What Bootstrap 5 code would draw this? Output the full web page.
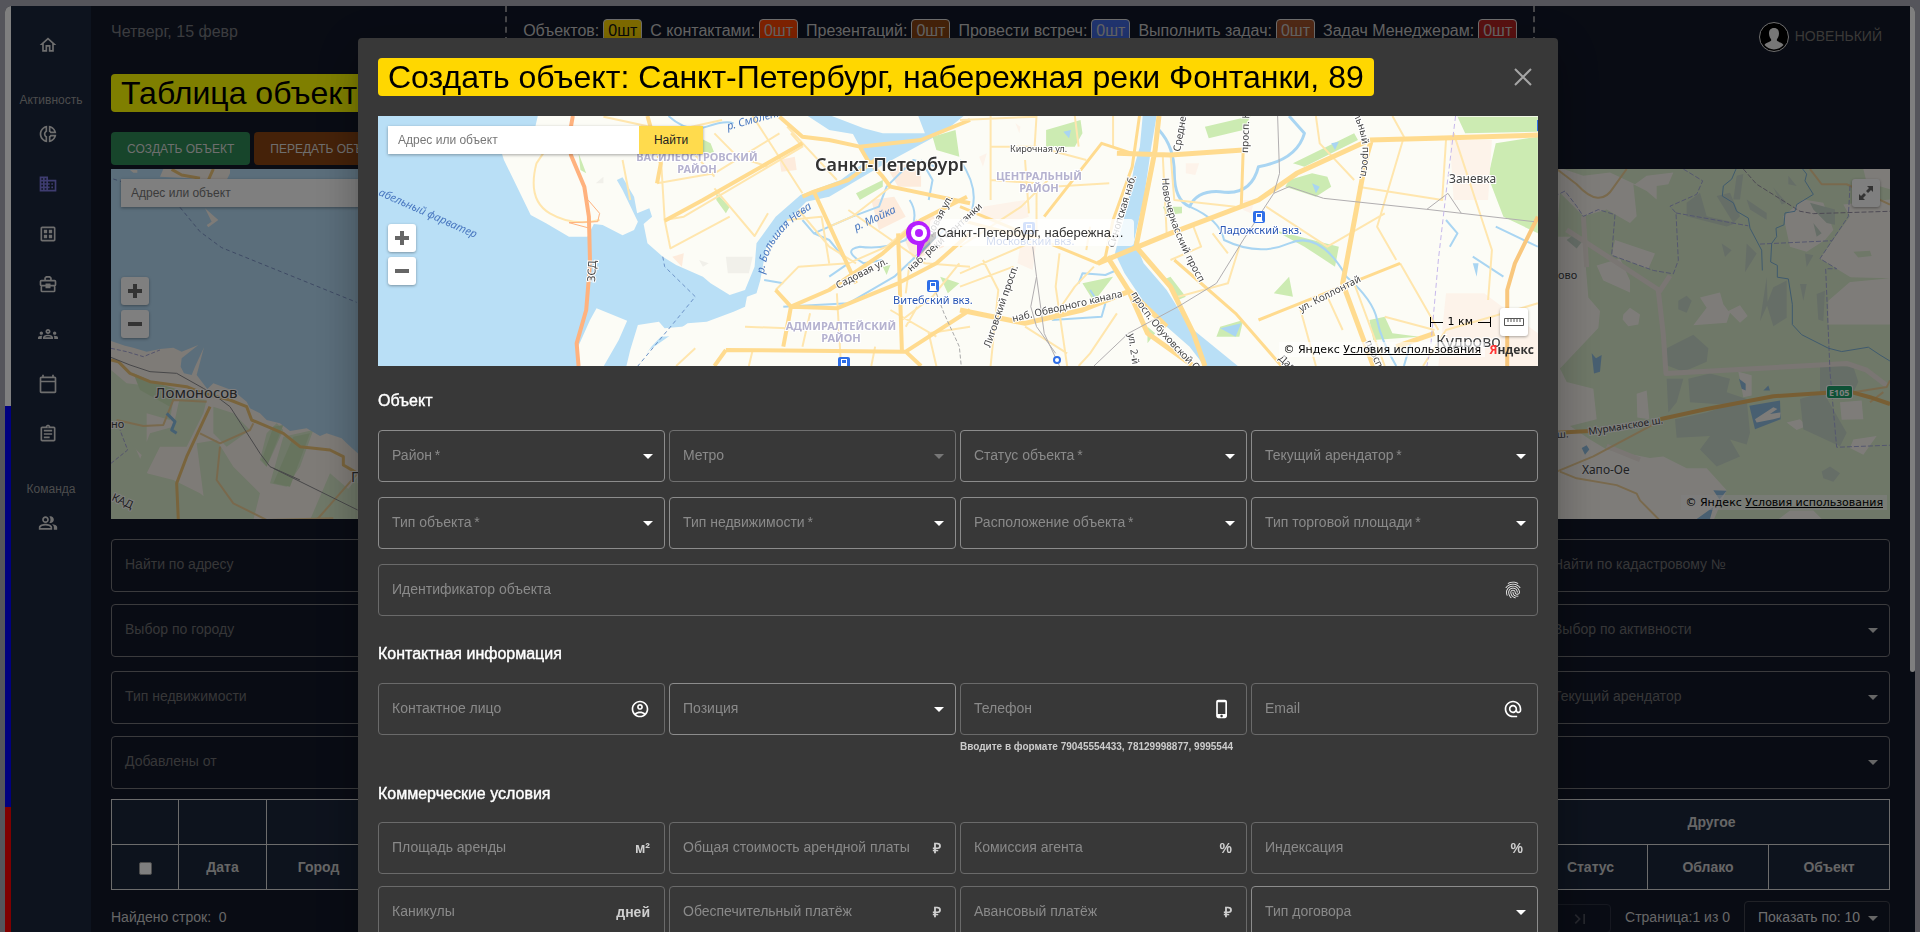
<!DOCTYPE html>
<html lang="ru">
<head>
<meta charset="utf-8">
<meta name="viewport" content="width=device-width, initial-scale=1">
<title>Таблица объектов</title>
<link href="https://cdn.jsdelivr.net/npm/bootstrap@5.3.0/dist/css/bootstrap.min.css" rel="stylesheet">
<style>
html, body { height: 100%; }
body { background: #aaabb7; font-family: "Liberation Sans", Arial, sans-serif; font-size: 14px; line-height: 20px; color: #ddd; overflow: hidden; }
svg { fill: currentColor; display: block; flex: none; }
.ico { width: 20px; height: 20px; }
.shell { height: 100vh; padding: 6px 5px 0; }
.shell-in { border-radius: 6px 6px 0 0; overflow: hidden; background: #11182a; }
.flag { flex: none; width: 6px; background: linear-gradient(#fff 400px, #00f 400px, #00f 801px, #f00 801px); }
.scroller { flex: none; width: 5px; }
.scroller div { height: 666px; background: #fff; border-radius: 0 0 3px 3px; }
.side { width: 80px; background: #1a263d; padding-top: 14px; color: #ddd; }
.side a { height: 50px; color: inherit; display: flex; align-items: center; justify-content: center; }
.side a svg { margin-right: 6px; }
.side a.current { color: #7c78e0; }
.side h6 { font-size: 12px; line-height: 18px; margin: 21px 0 0; font-weight: 400; text-align: center; color: #999; }
.page-main { background: #121829; padding: 0 20px; min-width: 0; }
.topbar { display: grid; grid-template-columns: 10fr auto 9fr; height: 68px; }
.day { font-size: 16px; color: #77787e; padding-top: 16px; }
.stats { border: dashed #8f8f94; border-width: 0 2px; padding: 13px 16px 0; font-size: 16px; line-height: 24px; white-space: nowrap; gap: 8px; align-items: flex-start; color: #ccc; }
.pill { border: 1px solid #ddd; border-radius: 4px; padding: 0 4px; margin-left: 4px; display: inline-block; line-height: 22px; }
.user { padding: 16px 8px 0 0; gap: 6px; color: #75726e; }
.bar-title { font-size: 32px; line-height: 38px; border-radius: 4px; padding: 0 10px; color: #000; font-weight: 400; margin: 0; white-space: nowrap; }
.act { font-size: 12px; height: 33px; padding: 0 16px; color: #ddd; border: 0; border-radius: 4px; }
.mapbox { position: relative; overflow: hidden; color: #333; }
.mapbox > svg { width: 100%; height: 100%; }
.finder { position: absolute; left: 10px; top: 10px; box-shadow: 0 1px 3px rgba(0,0,0,.35); }
.finder input { width: 251px; height: 28px; border: 0; padding: 0 10px; font-size: 12px; background: #fff; color: #333; }
.finder input::placeholder { color: #777; opacity: 1; }
.finder button { width: 64px; height: 28px; border: 0; background: #ffdb4d; font-size: 12px; color: #222; }
.mapbtn { width: 28px; height: 28px; padding: 0; border: 0; border-radius: 3px; background: #fff; color: #666; box-shadow: 0 1px 3px rgba(0,0,0,.35); display: flex; align-items: center; justify-content: center; }
.zoomers { position: absolute; left: 10px; top: 108px; display: grid; gap: 5px; }
.credits { position: absolute; background: rgba(255,255,255,.6); font: 11px/15px "DejaVu Sans", sans-serif; color: #000; white-space: nowrap; padding: 0 4px; }
.credits a { color: #000; }
.field { position: relative; }
.field input, .field select { display: block; width: 100%; height: 52px; border: 1px solid #6a6a6a; border-radius: 4px; background: transparent; color: #fff; padding: 0 14px; font-size: 14px; appearance: none; }
.field select { border-color: #8c8c8c; }
.field select:disabled { border-color: #707070; opacity: 1; }
.field label { position: absolute; inset: 0 44px 2px 14px; display: flex; align-items: center; pointer-events: none; color: #8a8a8a; white-space: nowrap; }
.tail { position: absolute; inset: 0 15px 0 auto; display: flex; align-items: center; pointer-events: none; color: #fff; }
.arrow::after { content: ""; position: absolute; right: 12px; top: 24px; border: solid transparent; border-width: 5px 5px 0; border-top-color: #fff; pointer-events: none; }
.arrow.off::after { border-top-color: #777; }
.unit { font-weight: 700; color: #cfcfcf; }
.filters { display: grid; grid-template-columns: repeat(5, minmax(0, 1fr)); column-gap: 6px; row-gap: 12px; }
.filters .last { grid-column: 5; }
.filters .field input, .filters .field select { height: 53px; border-color: #76777b; }
.filters .field label { color: #6e6e70; bottom: 4px; }
.filters .arrow::after { border-top-color: #ccc; }
.grid-head { table-layout: fixed; width: 100%; border-collapse: collapse; background: #1b263b; color: #ccc; text-align: center; }
.grid-head th { border: 1px solid #d8d8d8; height: 45px; padding: 0; font-weight: 700; }
.grid-head input { width: 13px; height: 13px; margin: 0; vertical-align: middle; appearance: none; background: #fff; border: 1px solid #999; border-radius: 2px; }
.pager { color: #ccc; height: 34px; margin-top: 11px; }
.pager .count { padding-top: 6px; }
.pager .last-page { height: 29px; width: 62px; border: 1px solid #2c3140; border-radius: 4px; background: none; color: #4c4f5c; display: flex; align-items: center; justify-content: center; margin-top: 3px; }
.pager select { height: 34px; width: 146px; border: 1px solid #42454f; border-radius: 4px; background: transparent; color: #ddd; appearance: none; padding: 0 13px 2px; display: block; font-size: 14px; }
.pager .arrow::after { top: 15px; border-top-color: #ccc; }
.shade { --bs-backdrop-opacity: .5; }
.modal { padding-right: 4px; overflow: hidden; }
.modal-dialog { max-width: 1200px; margin: 38px auto; }
.modal-content { background: #383838; border: 0; border-radius: 4px; padding: 20px; color: #fff; box-shadow: 0 11px 15px -7px rgba(0,0,0,.2), 0 24px 38px 3px rgba(0,0,0,.14), 0 9px 46px 8px rgba(0,0,0,.12); }
.modal-content h3 { font-size: 16px; line-height: 20px; font-weight: 400; -webkit-text-stroke: .4px #fff; margin: 0 0 19px; }
.closer { background: none; border: 0; padding: 0; color: #a5a5a5; width: 30px; height: 30px; display: flex; align-items: center; justify-content: center; }
.cells { display: grid; grid-template-columns: repeat(4, minmax(0, 1fr)); column-gap: 4px; row-gap: 15px; align-items: start; }
.cells.tight { row-gap: 12px; }
.wide { grid-column: 1 / -1; }
.hint-text { font-size: 10px; line-height: 12px; font-weight: 700; color: #ccc; margin-top: 6px; white-space: nowrap; }
.mapbox .nm { font-family: "Noto Sans", "Open Sans", sans-serif; font-size: 11px; fill: #444; paint-order: stroke; stroke: #fff; stroke-width: 2px; }
.nm .dist { font-size: 11px; font-weight: 700; fill: #b5b2cf; text-anchor: middle; }
.nm .river { fill: #4a78c0; font-style: italic; stroke: none; font-size: 11px; }
.nm .stn { fill: #2a57b5; }
.nm .street { font-size: 10px; }
.nm .town { font-size: 12px; }
.nm .city { font-size: 18px; font-weight: 600; fill: #333; }
.ln * { fill: none; vector-effect: non-scaling-stroke; stroke-linejoin: round; }
.caption-box { position: absolute; left: 552px; top: 103px; height: 27px; line-height: 27px; padding: 0 10px 0 7px; background: rgba(255,255,255,.8); border-radius: 4px; color: #333; font-size: 13px; white-space: nowrap; }
.measure { position: absolute; right: 10px; bottom: 30px; gap: 9px; }
.km { font: 11px/14px "DejaVu Sans", sans-serif; color: #000; gap: 5px; }
.km i { width: 13px; height: 10px; border-left: 1px solid #000; background: linear-gradient(#000, #000) 0 5px / 100% 1px no-repeat; }
.km i + span + i { border-left: 0; border-right: 1px solid #000; }
.brand { position: absolute; right: 4px; bottom: 8px; font: 700 12px/16px "Open Sans", "Noto Sans", sans-serif; color: #333; }
.brand span { color: #f33; }
</style>
</head>
<body>
<div class="shell">
<div class="shell-in d-flex h-100">
  <div class="flag"></div>
  <nav class="side flex-shrink-0" aria-label="Меню">
    <a href="#" aria-label="Главная"><svg class="ico" viewBox="0 0 24 24"><path d="M12 5.69l5 4.5V18h-2v-6H9v6H7v-7.81l5-4.5M12 3L2 12h3v8h6v-6h2v6h6v-8h3L12 3z"/></svg></a>
    <h6>Активность</h6>
    <a href="#" aria-label="Статистика"><svg class="ico" viewBox="0 0 24 24"><path d="M14.82 11h7.13c-.47-4.72-4.23-8.48-8.95-8.95v7.13c.85.31 1.51.97 1.82 1.82zM15 4.58C17 5.4 18.6 7 19.42 9h-3.43c-.28-.37-.62-.71-.99-.99V4.58zM2 12c0 5.19 3.95 9.45 9 9.95v-7.13C9.84 14.4 9 13.3 9 12c0-1.3.84-2.4 2-2.82V2.05c-5.05.5-9 4.76-9 9.95zm7-7.42v3.44c-1.23.92-2 2.39-2 3.98 0 1.59.77 3.06 2 3.99v3.44C6.04 18.24 4 15.35 4 12c0-3.35 2.04-6.24 5-7.42zm4 10.24v7.13c4.72-.47 8.48-4.23 8.95-8.95h-7.13c-.31.85-.97 1.51-1.82 1.82zm2 1.17c.37-.28.71-.61.99-.99h3.43C18.6 17 17 18.6 15 19.42v-3.43z"/></svg></a>
    <a href="#" class="current" aria-label="Объекты"><svg class="ico" viewBox="0 0 24 24"><path d="M12 7V3H2v18h20V7H12zM6 19H4v-2h2v2zm0-4H4v-2h2v2zm0-4H4V9h2v2zm0-4H4V5h2v2zm4 12H8v-2h2v2zm0-4H8v-2h2v2zm0-4H8V9h2v2zm0-4H8V5h2v2zm10 12h-8v-2h2v-2h-2v-2h2v-2h-2V9h8v10zm-2-8h-2v2h2v-2zm0 4h-2v2h2v-2z"/></svg></a>
    <a href="#" aria-label="Таблицы"><svg class="ico" viewBox="0 0 24 24"><path d="M19 3H5c-1.1 0-2 .9-2 2v14c0 1.1.9 2 2 2h14c1.1 0 2-.9 2-2V5c0-1.1-.9-2-2-2zm0 16H5V5h14v14zM7 7h4v4H7zm6 0h4v4h-4zm-6 6h4v4H7zm6 0h4v4h-4z"/></svg></a>
    <a href="#" aria-label="Портфель"><svg class="ico" viewBox="0 0 24 24"><path fill="none" stroke="currentColor" stroke-width="2" d="M8.500 7V5l1.500-1.500h4L15.500 5v2M4 8h16q1 0 1 1v4q0 1-1 1H4q-1 0-1-1V9q0-1 1-1zM4 14v6q0 1 1 1h14q1 0 1-1v-6M10 12.500h4v3.500h-4z"/></svg></a>
    <a href="#" aria-label="Группы"><svg class="ico" viewBox="0 0 24 24"><path d="M4 13c1.100 0 2-.9 2-2s-.9-2-2-2-2 .9-2 2 .9 2 2 2zm1.130 1.100c-.37-.06-.74-.1-1.130-.1-.99 0-1.930.21-2.780.58C.48 14.900 0 15.620 0 16.430V18h4.500v-1.610c0-.83.23-1.610.63-2.290zM20 13c1.100 0 2-.9 2-2s-.9-2-2-2-2 .9-2 2 .9 2 2 2zm4 3.430c0-.81-.48-1.530-1.220-1.850-.85-.37-1.790-.58-2.780-.58-.39 0-.76.04-1.130.1.4.68.63 1.460.63 2.290V18H24v-1.570zm-7.760-2.780c-1.170-.52-2.610-.9-4.240-.9-1.630 0-3.070.39-4.240.9C6.680 14.130 6 15.210 6 16.390V18h12v-1.610c0-1.180-.68-2.260-1.760-2.740zM8.070 16c.09-.23.13-.39.91-.69.97-.38 1.990-.56 3.020-.56s2.050.18 3.020.56c.77.3.81.46.91.69H8.070zM12 8c.55 0 1 .45 1 1s-.45 1-1 1-1-.45-1-1 .45-1 1-1m0-2c-1.660 0-3 1.340-3 3s1.340 3 3 3 3-1.340 3-3-1.340-3-3-3z"/></svg></a>
    <a href="#" aria-label="Календарь"><svg class="ico" viewBox="0 0 24 24"><path d="M20 3h-1V1h-2v2H7V1H5v2H4c-1.100 0-2 .9-2 2v16c0 1.100.9 2 2 2h16c1.100 0 2-.9 2-2V5c0-1.100-.9-2-2-2zm0 18H4V10h16v11zm0-13H4V5h16v3z"/></svg></a>
    <a href="#" aria-label="Задачи"><svg class="ico" viewBox="0 0 24 24"><path d="M7 15h7v2H7zm0-4h10v2H7zm0-4h10v2H7zm12-4h-4.180C14.400 1.840 13.300 1 12 1c-1.300 0-2.400.84-2.820 2H5c-1.100 0-2 .9-2 2v14c0 1.100.9 2 2 2h14c1.100 0 2-.9 2-2V5c0-1.100-.9-2-2-2zm-7-.25c.41 0 .75.34.75.75s-.34.75-.75.75-.75-.34-.75-.75.34-.75.75-.75zM19 19H5V5h14v14z"/></svg></a>
    <h6>Команда</h6>
    <a href="#" aria-label="Сотрудники"><svg class="ico" viewBox="0 0 24 24"><path d="M16.670 13.130C18.040 14.060 19 15.320 19 17v3h4v-3c0-2.180-3.570-3.470-6.330-3.870zM15 12c2.210 0 4-1.790 4-4s-1.790-4-4-4c-.47 0-.91.1-1.330.24C14.500 5.270 15 6.580 15 8s-.5 2.730-1.330 3.760c.42.14.86.24 1.330.24zM9 12c2.210 0 4-1.790 4-4s-1.790-4-4-4-4 1.790-4 4 1.790 4 4 4zm0-6c1.100 0 2 .9 2 2s-.9 2-2 2-2-.9-2-2 .9-2 2-2zm0 7c-2.670 0-8 1.340-8 4v3h16v-3c0-2.660-5.330-4-8-4zm6 5H3v-.99C3.200 16.290 6.300 15 9 15s5.800 1.290 6 2v1z"/></svg></a>
  </nav>

  <main class="page-main flex-grow-1 overflow-hidden">
    <header class="topbar">
      <div class="day">Четверг, 15 февр</div>
      <div class="stats d-flex">
        <div>Объектов:<span class="pill" style="background:#ffd700;color:#111">0шт</span></div>
        <div>С контактами:<span class="pill" style="background:#ff4500">0шт</span></div>
        <div>Презентаций:<span class="pill" style="background:#8b4513">0шт</span></div>
        <div>Провести встреч:<span class="pill" style="background:#4169e1">0шт</span></div>
        <div>Выполнить задач:<span class="pill" style="background:#a0522d">0шт</span></div>
        <div>Задач Менеджерам:<span class="pill" style="background:#b22222">0шт</span></div>
      </div>
      <div class="user d-flex justify-content-end">
        <svg width="30" height="30" viewBox="0 0 30 30"><circle cx="15" cy="15" r="14.500" fill="#000" stroke="#ddd"/><path d="M15 6c3.500 0 5 2.300 5 5.500 0 3-1.500 4.500-2.300 6.500.3 2 5.300 2 6.800 5a12.500 12.500 0 0 1-19 0c1.500-3 6.500-3 6.800-5-.8-2-2.300-3.500-2.300-6.500C10 8.300 11.500 6 15 6z" fill="#eee"/></svg>
        <span class="pt-1">НОВЕНЬКИЙ</span>
      </div>
    </header>
    <div class="d-flex"><h1 class="bar-title" style="background:#ff0">Таблица объектов</h1></div>
    <div class="d-flex gap-1 mb-1" style="margin-top:20px">
      <button class="act" style="background:#2e8b57">СОЗДАТЬ ОБЪЕКТ</button>
      <button class="act" style="background:#8b4513">ПЕРЕДАТЬ ОБЪЕКТ</button>
    </div>

    <div class="mapbox" style="height:350px">
      <svg viewBox="0 0 1779 350" preserveAspectRatio="xMidYMid slice">
        <rect width="1779" height="350" fill="#def0d0"/>
        <g transform="matrix(.33333 0 0 .33333 -111 -169)">
          <path fill="#fdf6ee" d="M333 1000H1300V1560H1000L1060 1480 990 1420 930 1560H700L640 1500 560 1480 440 1420 360 1240 333 1200z"/>
          <path fill="#def0d0" d="M333 1110L380 1150 470 1160 520 1200 510 1260 440 1240 440 1380 400 1340 360 1290 333 1300zM540 1190L620 1200 610 1240 560 1340 480 1340 440 1420 520 1440 600 1480 700 1560 720 1610H333V1400L400 1430 450 1300 520 1280zM640 1220L700 1240 750 1290 680 1340 640 1300zM590 1330L650 1320 700 1400 780 1480 760 1560 680 1600 620 1560zM800 1300L830 1270 850 1290 800 1400 780 1380zM850 1310L940 1290 900 1400 860 1460 810 1450zM980 1550L1073 1430V1610H1010z"/>
          <path fill="#cfe8bd" d="M400 1120L470 1150 540 1170 510 1220 420 1170zM820 1280L850 1275 800 1400 785 1380zM880 1310L930 1300 870 1460 820 1450z"/>
          <path fill="#b6dcf6" d="M333 500H1300V1460L1120 1380 1073 1360 1040 1330 1025 1315 980 1300 960 1308 920 1285 870 1293 840 1270 800 1260 780 1240 750 1225 740 1205 700 1172 640 1150 622 1167 590 1125 612 1042 585 1100 575 1125 552 1120 542 1100 545 1075 595 1035 545 1055 520 1043 480 1047 440 1055 400 1043 375 1037 333 1023z"/>
          <path fill="#fdf6ee" d="M490 507H690V520L680 540H600L570 535 480 530zM390 510H412V518H400zM615 625L655 660 625 682 620 675 635 665z"/>
        </g>
        <g class="ln" transform="matrix(.33333 0 0 .33333 -111 -169)">
          <path stroke="#7d94c8" stroke-dasharray="4 3" d="M540 622L600 695 665 743 1070 907M340 537L365 545"/>
          <path stroke="#f2c879" stroke-width="3" d="M333 1080L355 1085 390 1120 450 1145 560 1160 610 1180 690 1200 740 1220 755 1260 850 1300 900 1340 990 1350 1030 1370 1030 1395 1073 1420M630 1220L560 1370 530 1450 535 1560 550 1610M400 1600L460 1620 640 1640M515 508L545 525 600 535M640 507L625 540"/>
          <path stroke="#f2d39a" stroke-width="2" d="M350 1260L430 1278 490 1275 520 1200 620 1205M600 1300L660 1330 750 1290 760 1270M660 1340L650 1440 700 1510 800 1560 1000 1555M1073 1420L950 1560"/>
          <path stroke="#8f8f92" d="M333 1072L390 1095 450 1115 530 1120 610 1165 650 1190 690 1220 780 1360 810 1400 900 1440M820 1405L1073 1530"/>
          <path stroke="#8bc0e6" stroke-width="3" d="M500 1240L525 1265 515 1290 530 1300"/>
          <path stroke="#a8a8d8" stroke-dasharray="4 2" d="M333 1045L380 1055 430 1070 480 1050M333 1390L383 1350 360 1290"/>
        </g>
        <g transform="matrix(.33333 0 0 .33806 1429 -169)">
          <path fill="#fdf9f3" d="M-100 500H70L130 520 210 510 285 545 320 520 400 510 385 545 350 550 350 590 320 565 280 545 290 640 270 660 200 620 130 640 90 600 60 570 50 700 130 700 145 880 180 920 175 970 60 1090 80 1130 160 1150 170 1240 90 1260 150 1300 200 1330 330 1355 370 1350 440 1385 500 1385 560 1450 520 1540H-100z"/>
          <path fill="#fdf9f3" d="M225 710L345 750 325 795 215 755zM170 785L240 765 270 830 270 865 190 830zM250 930L270 910 300 930 295 960 265 965 248 945zM480 880L540 865 550 900 565 920 600 903 623 935 600 955 570 925 560 955 460 962 500 910zM730 640L790 590 850 600 880 680 855 710 800 745 750 730zM910 605L1050 590V960H865L865 890 940 825 840 765 930 640zM290 1165L320 1155 328 1240 292 1235zM595 1100L635 1110V1170L610 1175zM900 1190L965 1185 970 1240 905 1242zM740 1250L780 1240 800 1260 770 1272zM940 1300L1010 1290 970 1345 930 1325zM710 1540L750 1510H820L850 1540zM970 500H1050V560L980 540z"/>
          <path fill="#def0d0" d="M870 840L1050 823 930 820zM940 745L990 742 995 757 955 762z"/>
          <path fill="#ccdccf" d="M440 600L480 570 500 640 590 660 560 670 440 640zM530 580L570 570 600 640 580 660zM590 520L610 515 600 590 580 590zM620 590L680 630 680 650 630 620zM700 555L740 600 725 605zM745 520L770 550 745 545zM810 600L885 620 885 665 860 660 820 620zM820 660L845 690 830 700zM545 720L575 740 555 760zM620 720L650 750 615 805zM795 750L820 755 800 790zM680 820L683 900 660 950zM700 850L740 830 740 940 700 965 680 900zM780 840L800 840 790 890zM830 870L855 860 850 950 835 945zM415 890L440 875 455 890 440 925 415 915zM380 1030L460 990 505 1030 500 1070 430 1100 378 1080zM380 1120L430 1120 410 1190 385 1220zM445 1120L510 1105 570 1120 560 1160 620 1180 610 1200 450 1190zM405 1240L500 1220 620 1180 630 1280 620 1315 570 1300 600 1350 530 1380 480 1330 510 1290 410 1295zM780 1180L850 1160 920 1280 900 1320 790 1270zM840 1080L940 1085 955 1130 940 1160 840 1160zM845 1395L870 1380 900 1400 880 1425 850 1415zM80 710L100 695 130 710 110 735z"/>
          <path fill="#91bfe2" d="M628 1200L720 1185 722 1240 645 1270zM597 1120L617 1135 617 1155 605 1150zM670 1155L685 1140 690 1155zM155 1045L168 1060 185 1050 180 1100 162 1105zM125 1325L140 1317 148 1330 135 1345zM520 1450L560 1452 520 1500 510 1535H470L520 1500 540 1480z"/>
          <path fill="#fdf9f3" d="M645 1240L700 1205 712 1210 690 1225 722 1220 720 1235 700 1240 650 1250z"/>
        </g>
        <g class="ln" transform="matrix(.33333 0 0 .33806 1429 -169)">
          <path stroke="#f4ece6" stroke-width="5" d="M80 680L360 860 390 815M130 640L140 790M355 860L370 990 378 1105 920 1075 980 1095 1040 1140M200 1320L300 1360"/>
          <path stroke="#f2d39a" stroke-width="2" d="M50 500L110 545Q180 620 220 555L260 500M810 500L845 545H920L1050 605M50 1395L160 1350 360 1245M60 1395L110 1415 230 1435 290 1460 300 1480 360 1540M940 1160L1040 1145 1050 1125M990 1190L1030 1160"/>
          <path stroke="#f0bd68" stroke-width="4" d="M50 1280L150 1275M360 1240L500 1210 700 1172 860 1162M935 1160L990 1175 1050 1195"/>
          <path stroke="#9b95a8" stroke-dasharray="5 2" d="M610 500L650 545 780 625 820 632 1050 625"/>
          <path stroke="#a9aede" stroke-dasharray="5 2" d="M430 500L488 535 470 575 390 610 408 630 415 770 400 810 340 800 215 755 225 635 175 620 130 640 110 610 75 565 55 575M408 630L625 668M660 722L875 712M930 550L925 640 840 765 890 795H857L870 1100 890 1323 1050 1317"/>
          <path stroke="#7fb5dd" d="M588 500L575 530 550 550 547 580 580 600 590 625 625 645 630 675 665 740 667 800M788 500L800 515 795 535 820 575 770 605 765 625 735 630 732 665 708 675 710 700 695 720 692 775 712 785 712 820 745 825 757 900 757 960 785 990 865 1030 905 1040 985 1027 1020 1050 1050 1068"/>
        </g>
        <g class="nm">
          <text x="44" y="229" style="font-size:15px">Ломоносов</text>
          <text x="0" y="259">но</text><text x="0" y="331" transform="rotate(24 0 331)">КАД</text>
          <text x="240" y="313" style="font-size:14px">Петергоф</text>
          <text x="1447" y="110">ово</text>
          <text class="street" x="1446" y="269" transform="rotate(-3 1446 269)">ш.</text>
          <text class="street" x="1478" y="266" transform="rotate(-9 1478 266)">Мурманское ш.</text>
          <text class="town" x="1471" y="305">Хапо-Ое</text>
          <rect x="1716" y="217" width="25" height="12" rx="2" fill="#1ca36c"/><text x="1718" y="227" style="font-size:9px;font-weight:700;fill:#fff;stroke:none">E105</text>
        </g>
      </svg>
      <div class="finder"><input type="text" aria-label="Адрес или объект" placeholder="Адрес или объект"></div>
      <div class="zoomers">
        <button class="mapbtn" aria-label="Приблизить"><svg width="14" height="14"><path d="M5 0h4v5h5v4H9v5H5V9H0V5h5z"/></svg></button>
        <button class="mapbtn" aria-label="Отдалить"><svg width="14" height="14"><path d="M0 5h14v4H0z"/></svg></button>
      </div>
      <button class="mapbtn position-absolute" style="right:10px;top:10px" aria-label="На весь экран"><svg width="14" height="14"><path d="M8 0h6v6l-2-2-3 3-2-2 3-3zM0 8l2 2 3-3 2 2-3 3 2 2H0z"/></svg></button>
      <div class="credits" style="right:3px;bottom:9px">© Яндекс <a href="#">Условия использования</a></div>
    </div>

    <div class="filters" style="margin-top:20px">
      <div class="field"><input id="f1" type="text"><label for="f1">Найти по адресу</label></div>
      <div class="field last"><input id="f2" type="text"><label for="f2">Найти по кадастровому №</label></div>
      <div class="field arrow"><select id="f3"><option></option></select><label for="f3">Выбор по городу</label></div>
      <div class="field arrow last"><select id="f4"><option></option></select><label for="f4">Выбор по активности</label></div>
    </div>
    <div class="filters" style="margin:14px 0 10px">
      <div class="field arrow"><select id="f5"><option></option></select><label for="f5">Тип недвижимости</label></div>
      <div class="field arrow last"><select id="f6"><option></option></select><label for="f6">Текущий арендатор</label></div>
      <div class="field"><input id="f7" type="text"><label for="f7">Добавлены от</label></div>
      <div class="field arrow last"><select aria-label="Сортировка"><option></option></select></div>
    </div>
    <table class="grid-head">
      <colgroup><col style="width:67px"><col style="width:88px"><col style="width:104px"><col><col style="width:114px"><col style="width:121px"><col style="width:121px"></colgroup>
      <thead>
        <tr><th></th><th></th><th></th><th></th><th colspan="3">Другое</th></tr>
        <tr><th><input type="checkbox" aria-label="Выбрать все"></th><th>Дата</th><th>Город</th><th></th><th>Статус</th><th>Облако</th><th>Объект</th></tr>
      </thead>
    </table>
    <div class="pager d-flex justify-content-between">
      <div class="count">Найдено строк: &nbsp;0</div>
      <div class="d-flex" style="gap:14px">
        <button class="last-page" disabled aria-label="Последняя страница"><svg class="ico" viewBox="0 0 24 24"><path d="M5.590 7.410L10.180 12l-4.590 4.590L7 18l6-6-6-6zM16 6h2v12h-2z"/></svg></button>
        <div class="count">Страница:1 из 0</div>
        <div class="position-relative arrow"><select aria-label="Показать по"><option>Показать по: 10</option></select></div>
      </div>
    </div>
  </main>
  <div class="scroller"><div></div></div>
</div>
</div>

<div class="modal-backdrop show shade"></div>
<div class="modal d-block" tabindex="-1" role="dialog" aria-modal="true" aria-labelledby="dlg-title">
<div class="modal-dialog">
<div class="modal-content">
  <div class="d-flex justify-content-between align-items-center" style="margin-bottom:20px">
    <h2 class="bar-title" id="dlg-title" style="background:#ffd700">Создать объект: Санкт-Петербург, набережная реки Фонтанки, 89</h2>
    <button class="closer" aria-label="Закрыть"><svg width="18" height="18"><path d="M1 1l16 16M17 1L1 17" stroke="currentColor" stroke-width="2"/></svg></button>
  </div>

  <div class="mapbox" style="height:250px">
    <svg viewBox="0 0 1160 250" preserveAspectRatio="xMidYMid slice">
      <rect width="1160" height="250" fill="#fcfcf6"/>
      <g transform="matrix(.38268 0 0 .33333 -8 -116)">
        <path fill="#b9dff6" d="M0 340H440L432 380 345 462 350 480 420 645 460 670 520 710H568L585 672 608 675 660 706 690 690 700 665 660 570 645 540 660 532 690 590 698 640 730 625 737 650 715 672 725 730 765 770 800 795 870 830 890 850 940 885 980 870 1005 800 1010 730 1060 650 1125 585 1230 540 1300 480 1275 430 1262 402 1200 390 1140 345H1200L1290 385 1340 400 1450 400 1430 340H1560L1500 395 1340 495 1200 590 1140 605 1080 675 1035 745 1020 840 1010 880 985 890 980 920 950 935 880 965 830 970 730 1050 690 1100H610L650 1020 672 962 592 925 575 960 540 1050 550 1100H0z"/>
        <path fill="#fcfcf6" d="M700 975L755 965 770 985 835 978 838 1005 760 1010 735 1040 700 1098H670L680 1050z"/>
        <path fill="#fdebdc" d="M1350 500L1440 490 1440 560 1380 560zM1310 600L1370 590 1400 650 1330 690zM1390 700L1470 640 1500 740 1420 780zM1070 480L1110 470 1115 510 1075 515zM790 770L820 760 815 800z"/>
        <path fill="#ccebb2" d="M1470 410L1530 390 1540 470 1480 450zM1270 580L1340 540 1340 560 1280 600zM1490 830L1540 850 1510 880zM905 580L940 620 930 640 905 600zM820 390L890 430 900 460H820zM545 460L565 520 550 510zM1340 800L1360 795 1350 825z"/>
        <path fill="#f1f0ea" d="M590 550L610 530 610 550zM860 780L885 790 870 800zM930 770H1000L990 820H935z"/>
      </g>
      <g transform="matrix(.38268 0 0 .33333 582 -116)">
        <path fill="#b9dff6" d="M478 340L470 440 455 500 440 600 405 760 430 820 500 940 600 1040 640 1100H728L600 980 540 870 480 790 455 720 480 600 500 440 515 340z"/>
        <path fill="#ccebb2" d="M225 390L315 360 320 400 300 440H225zM640 380L760 348 740 390 650 415zM870 490L1030 400 1040 420 900 500zM860 540L920 520 960 530 970 560 930 590 850 560zM530 620H580V640L540 645zM820 690L990 740 980 800 900 740zM820 880L860 830 870 890zM530 840L550 830 590 890 570 900zM1300 350H1510V395L1320 400zM1400 430L1510 410V700L1420 650 1380 530zM320 850L400 830 350 905zM490 980L510 1000 490 1030zM680 980L740 960 730 1010 670 1010zM1070 960L1110 950 1130 1000 1200 1010 1080 1020z"/>
        <path fill="#fdf3ea" d="M60 620L170 600 180 650 100 680 50 650zM160 720L200 720 190 810 150 790zM590 490L625 490 615 525 590 520zM740 600L770 600 760 640 740 630zM1280 420L1390 420 1380 600 1290 600zM1270 880L1370 880 1510 1000V1098H1250zM50 470L70 460 60 500zM145 370L158 380 155 400z"/>
        <path fill="#a9d5f2" d="M270 395L290 390 285 415zM970 430L990 425 980 450zM920 550L940 560 930 580zM1340 790L1355 790 1350 830zM680 985L735 970 720 1010z"/>
      </g>
      <g class="ln" transform="matrix(.38268 0 0 .33333 -8 -116)" stroke="#ffe6ae" stroke-width="2">
        <path stroke="#a9d5f2" d="M1130 660L1160 700 1200 720 1250 790 1200 830M1160 700L1260 650 1330 620 1350 560 1420 480 1480 500M1410 600Q1440 650 1400 720Q1340 750 1280 740Q1230 750 1290 790L1340 780M1080 920L1250 910 1370 830 1500 690M780 348Q830 400 880 380T950 370M1030 840L1080 850M1440 480L1470 540 1460 600"/>
        <path d="M435 490Q410 600 470 640 T600 660M435 490L470 430 620 400M740 390L760 470 770 660 820 650 1130 440 1100 400M610 350L750 385 840 380 920 360M660 480L680 600M750 550L900 520 1070 400M770 660L785 745 940 650M900 565L1005 708 1040 640M1000 348L1130 580M1090 380L1220 540M830 440L900 530M900 400L960 470 1040 500M1090 660L1180 650 1200 790M1120 630L1200 740 1270 790M1060 870L1120 800 1250 790 1350 740 1430 660M1220 880L1230 1080M1150 940L1130 1040M980 980L1090 985M990 1098L1000 1050M850 1045L800 1098M1310 1098L1320 1040M1480 1098L1460 1000 1568 980M1360 930L1480 1010M1400 980L1430 920M1250 630L1450 790 1568 800M1540 790L1470 890 1390 960M1410 790L1400 880M1360 560L1260 650 1200 680"/>
        <path stroke="#ffdb8f" stroke-width="4" d="M725 348L760 490 750 550M770 662L870 600 1130 430M1070 350L1130 410 1200 420 1280 440 1300 480 1340 530 1360 560 1568 610M1130 590L1160 575 1250 800 1270 850M1060 870L1100 920 1220 925 1380 850 1480 790 1568 700M930 1050L1400 1055 1568 930M930 1050L900 1098M1090 985L1100 920 1200 870 1340 760 1440 660 1560 590M1280 440L1440 420 1568 360M1160 575L1250 540 1320 480M1380 700L1390 1055M1400 1055L1440 1098M1080 1040L1100 920"/>
        <path stroke="#ffb27e" stroke-width="4" d="M530 348L522 400 525 465 560 560 572 650 575 790 565 930 540 1030 545 1098"/>
        <path stroke="#ffb27e" stroke-width="1" d="M570 600L600 640 595 665 520 668 575 685"/>
        <path stroke="#6d94c9" stroke-width="1" stroke-dasharray="4 3" d="M765 770L770 800 850 890 800 960 700 1098"/>
        <path stroke="#aaa" stroke-width="1" d="M1480 880L1500 940 1540 1040 1545 1098" stroke-dasharray="4 2"/>
      </g>
      <g class="ln" transform="matrix(.38268 0 0 .33333 582 -116)" stroke="#ffe6ae" stroke-width="2">
        <path stroke="#a9d5f2" stroke-width="3" d="M520 390Q560 440 560 520 T600 620Q620 570 680 575Q760 590 780 500Q880 480 900 400L860 348"/>
        <path stroke="#a9d5f2" d="M600 620Q680 660 690 720Q780 770 860 730 T1010 830Q1080 900 1090 960 T1140 1098"/>
        <path stroke="#a9d5f2" d="M0 480Q60 580 20 660M310 850L320 820 380 825 410 810M340 870L360 905M240 960L370 950 380 910M1400 680L1510 740M1340 770L1420 830M1270 660L1300 700 1280 740M1160 1098L1180 1020"/>
        <path d="M80 348V600M80 440H200L330 480M0 360L200 350M200 348L195 440M80 540L200 550 200 700M0 740L160 620 230 540M170 480L180 640M240 560L390 550M260 760L250 860 280 1098M0 820L200 720M350 800L300 860 240 960M60 780L100 870 80 1098M170 980L280 1060M410 940L340 1060 310 1098M300 348L310 440M400 348V440M550 460L560 600 720 620M530 470L540 700M610 680L630 740 550 780M660 700L700 760M800 620L960 740 1110 640M730 740L700 850 570 890M930 348L940 430 1030 540M1130 348L1160 410 1090 680 1140 780M1270 420L1260 600 1040 560M890 930L930 1098M960 890L1000 990M1150 790L1250 990M1030 850L1110 1098M1290 400L1390 750 1380 900M1210 1098L1270 990 1510 910M1110 950L1240 990M0 860L140 800M330 750L340 680"/>
        <path stroke="#ffdb8f" stroke-width="3" d="M740 450L735 620M470 340L450 500 400 660 380 770 360 790 0 620M780 960L1150 790M560 780L650 870 720 940 840 1098M220 650L370 430 450 460M0 660L200 720"/>
        <path stroke="#ffdb8f" stroke-width="5" d="M410 460L550 465 740 450M520 348L510 450 460 740 550 860 610 1000 640 1098M360 790L550 700 780 600 880 520 1070 420 1240 415 1510 405M1075 420L1060 480 1000 850 1080 1098M385 770L440 870 540 980M440 875L320 930 170 970 0 930M440 870L490 1000 610 1098M1140 1040L1240 1000"/>
        <path stroke="#f9c77d" stroke-width="4" d="M1510 650L1450 790 1430 870 1430 1098"/>
        <path stroke="#b1aeb0" stroke-width="1" d="M830 348L835 520 820 580 740 720 670 850 570 920 440 1000 350 1098M820 580L860 560 950 595 1220 628 1500 665M1220 628L1275 580 1310 640M190 740L200 830 220 1000 260 1098M200 830L185 920 200 980 250 1060"/>
        <path stroke="#c6b8ec" stroke-width="1" stroke-dasharray="5 3" d="M1295 348L1270 580 1250 780 1230 1040 1220 1098"/>
      </g>
      <defs>
        <path id="neva" d="M386 158Q390 118 438 90"/>
        <path id="novo" d="M784 62Q784 100 822 168"/>
        <path id="ind" d="M972 -6Q995 30 976 80"/>
        <path id="obuh" d="M753 178Q772 212 825 262"/>
      </defs>
      <g class="nm">
        <text class="city" x="437" y="55">Санкт-Петербург</text>
        <text class="dist" x="319" y="45">ВАСИЛЕОСТРОВСКИЙ</text><text class="dist" x="319" y="57">РАЙОН</text>
        <text class="dist" x="463" y="214">АДМИРАЛТЕЙСКИЙ</text><text class="dist" x="463" y="226">РАЙОН</text>
        <text class="dist" x="661" y="64">ЦЕНТРАЛЬНЫЙ</text><text class="dist" x="661" y="76">РАЙОН</text>
        <text x="632" y="36" style="font-size:9px">Кирочная ул.</text>
        <text class="town" x="1071" y="67">Заневка</text>
        <text x="1058" y="231" style="font-size:16px">Кудрово</text>
        <text class="stn" x="841" y="118">Ладожский вкз.</text>
        <text class="stn" x="515" y="188">Витебский вкз.</text>
        <text class="stn" x="608" y="129">Московский вкз.</text>
        <text x="217" y="166" transform="rotate(-87 217 166)">ЗСД</text>
        <text class="river" x="0" y="79" transform="rotate(24 0 79)">абельный фарватер</text>
        <text class="river"><textPath href="#neva">р. Большая Нева</textPath></text>
        <text class="river" x="478" y="115" transform="rotate(-25 478 115)">р. Мойка</text>
        <text class="river" x="350" y="14" transform="rotate(-15 350 14)">р. Смоленка</text>
        <text class="street" x="460" y="173" transform="rotate(-27 460 173)">Садовая ул.</text>
        <text class="street" x="533" y="156" transform="rotate(-42 533 156)">наб. реки Фонтанки</text>
        <text class="street" x="554" y="121" transform="rotate(-62 554 121)">довая ул.</text>
        <text class="street" x="612" y="232" transform="rotate(-71 612 232)">Лиговский просп.</text>
        <text class="street" x="635" y="206" transform="rotate(-13 635 206)">наб. Обводного канала</text>
        <text class="street" x="736" y="132" transform="rotate(-73 736 132)">Синопская наб.</text>
        <text class="street" x="802" y="36" transform="rotate(-80 802 36)">Среднеохтинский</text>
        <text class="street" x="870" y="37" transform="rotate(-88 870 37)">просп. Косыгина</text>
        <text class="street"><textPath href="#novo">Новочеркасский просп.</textPath></text>
        <text class="street"><textPath href="#ind">альный просп.</textPath></text>
        <text class="street"><textPath href="#obuh">просп. Обуховской Обороны</textPath></text>
        <text class="street" x="923" y="196" transform="rotate(-27 923 196)">ул. Коллонтай</text>
        <text class="street" x="750" y="218" transform="rotate(82 750 218)">ул. 2-й Луч</text>
        <text class="street" x="900" y="243" transform="rotate(42 900 243)">Дальн</text>
        <text class="street" x="987" y="226" transform="rotate(65 987 226)">просп.</text>
      </g>
      <g fill="#2f6fe8">
        <rect x="875" y="95" width="12" height="12" rx="2"/><rect x="549" y="164" width="12" height="12" rx="2"/><rect x="645" y="106" width="12" height="12" rx="2"/><rect x="460" y="241" width="12" height="12" rx="2"/><rect x="1159" y="4" width="6" height="11"/>
        <path fill="#fff" fill-rule="evenodd" d="M878 97h6v7l1 2h-8l1-2zm1 1v3h4v-3zM552 166h6v7l1 2h-8l1-2zm1 1v3h4v-3zM648 108h6v7l1 2h-8l1-2zm1 1v3h4v-3zM463 243h6v7l1 2h-8l1-2zm1 1v3h4v-3z"/>
        <circle cx="679" cy="244" r="3" fill="#fff" stroke="#2f6fe8" stroke-width="2"/>
      </g>
    </svg>
    <div class="caption-box">Санкт-Петербург, набережна…</div>
    <svg class="position-absolute" style="left:526px;top:100px;width:40px;height:46px" viewBox="0 0 40 46"><path d="M15 41L32 22 32 16 24 20z" fill="#000" opacity=".2"/><path d="M15 5a12 12 0 0 1 6 22L15 41q-2 0-2-2v-10A12 12 0 0 1 15 5z" fill="#b51eff"/><circle cx="15" cy="17" r="8" fill="#fff"/><circle cx="15" cy="17" r="4" fill="#b51eff"/></svg>
    <div class="finder d-flex"><input type="text" aria-label="Адрес или объект на карте" placeholder="Адрес или объект"><button>Найти</button></div>
    <div class="zoomers">
      <button class="mapbtn" aria-label="Приблизить"><svg width="14" height="14"><path d="M5 0h4v5h5v4H9v5H5V9H0V5h5z"/></svg></button>
      <button class="mapbtn" aria-label="Отдалить"><svg width="14" height="14"><path d="M0 5h14v4H0z"/></svg></button>
    </div>
    <div class="measure d-flex align-items-center">
      <div class="km d-flex align-items-center"><i></i><span>1 км</span><i></i></div>
      <button class="mapbtn" aria-label="Линейка"><svg width="20" height="8"><path d="M.5.5h19v7H.5zM4 1v3M7 1v3M10 1v3M13 1v3M16 1v3" fill="none" stroke="#555"/></svg></button>
    </div>
    <div class="credits" style="right:53px;bottom:9px">© Яндекс <a href="#">Условия использования</a></div>
    <div class="brand"><span>Я</span>ндекс</div>
  </div>

  <h3 style="margin-top:25px">Объект</h3>
  <div class="cells">
    <div class="field arrow"><select id="o1"><option></option></select><label for="o1">Район&thinsp;*</label></div>
    <div class="field arrow off"><select id="o2" disabled><option></option></select><label for="o2">Метро</label></div>
    <div class="field arrow"><select id="o3"><option></option></select><label for="o3">Статус объекта&thinsp;*</label></div>
    <div class="field arrow"><select id="o4"><option></option></select><label for="o4">Текущий арендатор&thinsp;*</label></div>
    <div class="field arrow"><select id="o5"><option></option></select><label for="o5">Тип объекта&thinsp;*</label></div>
    <div class="field arrow"><select id="o6"><option></option></select><label for="o6">Тип недвижимости&thinsp;*</label></div>
    <div class="field arrow"><select id="o7"><option></option></select><label for="o7">Расположение объекта&thinsp;*</label></div>
    <div class="field arrow"><select id="o8"><option></option></select><label for="o8">Тип торговой площади&thinsp;*</label></div>
    <div class="field wide"><input id="o9" type="text"><label for="o9">Идентификатор объекта</label>
      <span class="tail"><svg class="ico" viewBox="0 0 24 24"><path d="M17.810 4.470c-.08 0-.16-.02-.23-.06C15.660 3.420 14 3 12.010 3c-1.980 0-3.860.47-5.570 1.410-.24.13-.54.04-.68-.2-.13-.24-.04-.55.2-.68C7.820 2.520 9.860 2 12.010 2c2.130 0 3.990.47 6.030 1.520.25.13.34.43.21.67-.09.18-.26.28-.44.28zM3.500 9.720c-.1 0-.2-.03-.29-.09-.23-.16-.28-.47-.12-.7.99-1.400 2.250-2.500 3.750-3.270C9.980 4.040 14 4.030 17.150 5.650c1.500.77 2.760 1.860 3.750 3.250.16.22.11.54-.12.7-.23.16-.54.11-.7-.12-.9-1.260-2.040-2.250-3.390-2.940-2.870-1.470-6.540-1.470-9.400.01-1.360.7-2.500 1.700-3.400 2.960-.08.14-.23.21-.39.21zm6.250 12.070c-.13 0-.26-.05-.35-.15-.87-.87-1.340-1.430-2.010-2.640-.69-1.230-1.050-2.730-1.050-4.340 0-2.970 2.540-5.390 5.660-5.390s5.660 2.420 5.660 5.390c0 .28-.22.5-.5.5s-.5-.22-.5-.5c0-2.420-2.090-4.390-4.660-4.390-2.570 0-4.660 1.970-4.660 4.390 0 1.440.32 2.770.93 3.850.64 1.150 1.080 1.640 1.850 2.420.19.2.19.51 0 .71-.11.1-.24.15-.37.15zm7.170-1.850c-1.190 0-2.240-.3-3.100-.89-1.490-1.010-2.380-2.650-2.380-4.390 0-.28.22-.5.5-.5s.5.22.5.5c0 1.410.72 2.740 1.940 3.560.71.48 1.540.71 2.540.71.24 0 .64-.03 1.040-.1.27-.05.53.13.58.41.05.27-.13.53-.41.58-.57.11-1.070.12-1.210.12zM14.910 22c-.04 0-.09-.01-.13-.02-1.590-.44-2.630-1.030-3.720-2.100-1.400-1.390-2.170-3.240-2.170-5.220 0-1.620 1.380-2.940 3.080-2.940 1.700 0 3.080 1.320 3.080 2.940 0 1.070.93 1.940 2.080 1.940s2.080-.87 2.080-1.940c0-3.770-3.250-6.830-7.250-6.830-2.840 0-5.440 1.580-6.610 4.030-.39.81-.59 1.760-.59 2.800 0 .78.07 2.010.67 3.610.1.26-.03.55-.29.64-.26.1-.55-.04-.64-.29-.49-1.310-.73-2.610-.73-3.960 0-1.200.23-2.290.68-3.240 1.330-2.790 4.280-4.600 7.510-4.600 4.550 0 8.250 3.510 8.250 7.830 0 1.620-1.380 2.940-3.080 2.940s-3.080-1.320-3.080-2.940c0-1.070-.93-1.940-2.080-1.940s-2.080.87-2.080 1.940c0 1.710.66 3.310 1.870 4.510.95.94 1.860 1.460 3.270 1.850.27.07.42.35.35.61-.05.23-.26.38-.47.38z"/></svg></span></div>
  </div>

  <h3 style="margin-top:28px">Контактная информация</h3>
  <div class="cells">
    <div class="field"><input id="k1" type="text"><label for="k1">Контактное лицо</label><span class="tail"><svg class="ico" viewBox="0 0 24 24"><path d="M12 2C6.480 2 2 6.480 2 12s4.480 10 10 10 10-4.480 10-10S17.520 2 12 2zM7.350 18.500C8.660 17.560 10.260 17 12 17s3.340.56 4.650 1.500c-1.310.94-2.910 1.500-4.650 1.500s-3.340-.56-4.650-1.500zm10.790-1.380C16.450 15.800 14.320 15 12 15s-4.450.8-6.140 2.120C4.700 15.730 4 13.950 4 12c0-4.420 3.580-8 8-8s8 3.580 8 8c0 1.950-.7 3.730-1.860 5.120zM12 6c-1.930 0-3.500 1.570-3.500 3.500S10.070 13 12 13s3.500-1.570 3.500-3.500S13.930 6 12 6zm0 5c-.83 0-1.500-.67-1.500-1.500S11.170 8 12 8s1.500.67 1.500 1.500S12.830 11 12 11z"/></svg></span></div>
    <div class="field arrow"><select id="k2"><option></option></select><label for="k2">Позиция</label></div>
    <div>
      <div class="field"><input id="k3" type="tel" aria-describedby="k3h"><label for="k3">Телефон</label><span class="tail"><svg class="ico" viewBox="0 0 24 24"><path d="M15.500 1h-8C6.120 1 5 2.120 5 3.500v17C5 21.880 6.120 23 7.500 23h8c1.380 0 2.500-1.120 2.500-2.500v-17C18 2.120 16.880 1 15.500 1zm-4 21c-.83 0-1.500-.67-1.500-1.500s.67-1.500 1.500-1.500 1.500.67 1.500 1.500-.67 1.500-1.500 1.500zm4.500-4H7V4h9v14z"/></svg></span></div>
      <div class="hint-text" id="k3h">Вводите в формате 79045554433, 78129998877, 9995544</div>
    </div>
    <div class="field"><input id="k4" type="email"><label for="k4">Email</label><span class="tail"><svg class="ico" viewBox="0 0 24 24"><path d="M12 1.950c-5.520 0-10 4.480-10 10s4.480 10 10 10h5v-2h-5c-4.340 0-8-3.660-8-8s3.660-8 8-8 8 3.660 8 8v1.430c0 .79-.71 1.570-1.500 1.570s-1.500-.78-1.500-1.570v-1.430c0-2.760-2.240-5-5-5s-5 2.240-5 5 2.240 5 5 5c1.380 0 2.640-.56 3.540-1.470.65.89 1.770 1.470 2.960 1.470 1.970 0 3.500-1.600 3.500-3.570v-1.430c0-5.520-4.480-10-10-10zm0 13c-1.660 0-3-1.340-3-3s1.340-3 3-3 3 1.340 3 3-1.340 3-3 3z"/></svg></span></div>
  </div>

  <h3 style="margin-top:31px;margin-bottom:18px">Коммерческие условия</h3>
  <div class="cells tight">
    <div class="field"><input id="m1" type="text"><label for="m1">Площадь аренды</label><span class="tail unit">м²</span></div>
    <div class="field"><input id="m2" type="text"><label for="m2">Общая стоимость арендной платы</label><span class="tail unit">₽</span></div>
    <div class="field"><input id="m3" type="text"><label for="m3">Комиссия агента</label><span class="tail unit">%</span></div>
    <div class="field"><input id="m4" type="text"><label for="m4">Индексация</label><span class="tail unit">%</span></div>
    <div class="field"><input id="m5" type="text"><label for="m5">Каникулы</label><span class="tail unit">дней</span></div>
    <div class="field"><input id="m6" type="text"><label for="m6">Обеспечительный платёж</label><span class="tail unit">₽</span></div>
    <div class="field"><input id="m7" type="text"><label for="m7">Авансовый платёж</label><span class="tail unit">₽</span></div>
    <div class="field arrow"><select id="m8"><option></option></select><label for="m8">Тип договора</label></div>
  </div>
</div>
</div>
</div>
<script src="https://cdn.jsdelivr.net/npm/bootstrap@5.3.0/dist/js/bootstrap.bundle.min.js"></script>
</body>
</html>
